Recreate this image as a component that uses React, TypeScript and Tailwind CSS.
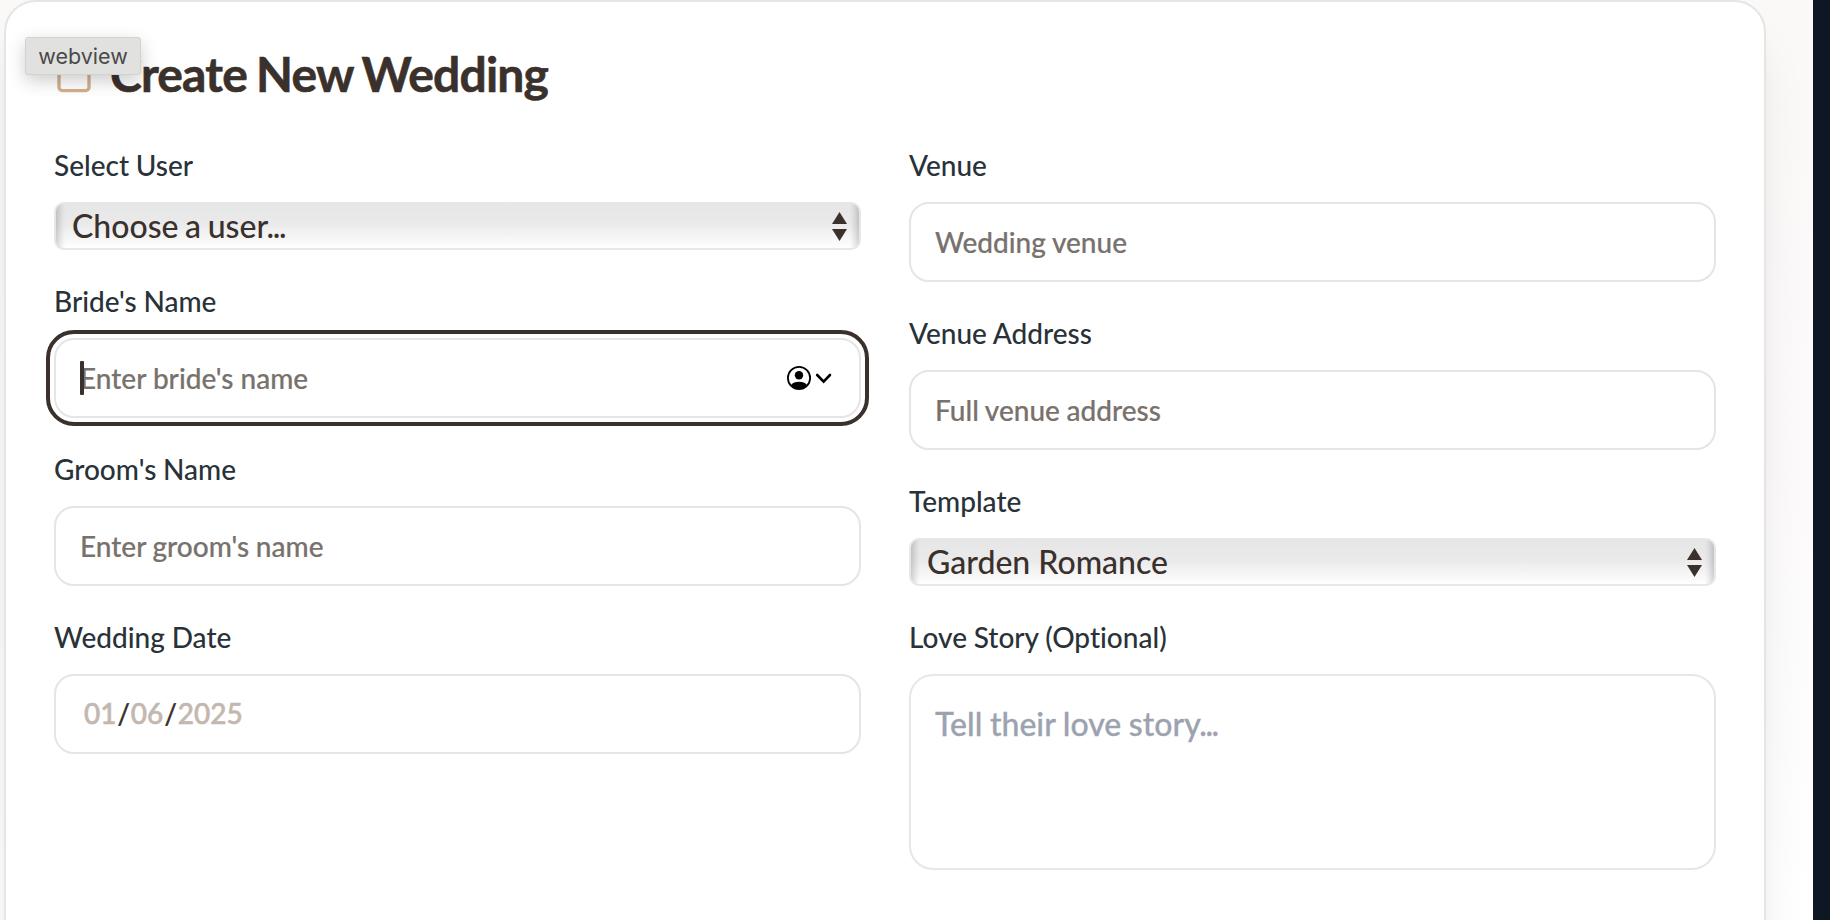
import type { ReactNode } from "react";

function Field({ label, children }: { label: string; children: ReactNode }) {
  return (
    <div className="flex flex-col">
      <label className="mb-[23px] block h-7 text-[28px] leading-7 font-medium [word-spacing:-0.3px] whitespace-nowrap text-[#293238]">
        {label}
      </label>
      {children}
    </div>
  );
}

function TextInput({ placeholder }: { placeholder: string }) {
  return (
    <input
      type="text"
      placeholder={placeholder}
      className="block h-20 w-full rounded-[20px] border-2 border-[#e5e5e5] bg-white px-6 text-[28px] font-medium [word-spacing:-0.4px] text-[#3a302c] [-webkit-text-stroke:0.2px] placeholder:text-[#78716c]"
    />
  );
}

function FocusedInput({ placeholder }: { placeholder: string }) {
  return (
    <div className="relative flex h-20 items-center justify-between rounded-[20px] border-2 border-[#e5e5e5] bg-white pr-[26px] pl-6 outline-4 outline-offset-4 outline-[#3a302c]">
      <span className="text-[28px] font-medium text-[#78716c] [-webkit-text-stroke:0.2px]">{placeholder}</span>
      <span className="absolute top-[21px] left-6 h-[34px] w-1 rounded-[1px] bg-[#3a302c]" />
      <svg className="h-6 w-[46px]" viewBox="0 0 46 24" fill="none">
        <circle cx="12" cy="12" r="11.1" stroke="#000" strokeWidth="1.8" />
        <circle cx="12" cy="9.3" r="4.2" fill="#000" />
        <path d="M4 19 C7 14.8 17 14.8 20 19 C16 24 8 24 4 19Z" fill="#000" />
        <path d="M30.2 9 L36.6 15.6 L43 9" stroke="#000" strokeWidth="2.6" strokeLinecap="round" />
      </svg>
    </div>
  );
}

function SelectBox({ value, ellipsis = false }: { value: string; ellipsis?: boolean }) {
  return (
    <div className="flex h-12 items-center justify-between rounded-[10px] border-2 border-[#e5e7eb] bg-[linear-gradient(90deg,#0000002a_0px,#0000000f_5px,#00000000_9px,#00000000_calc(100%-9px),#0000000f_calc(100%-5px),#0000002a_100%),linear-gradient(180deg,#e6e6e6_0%,#eaeaea_45%,#f5f5f5_75%,#ffffff_100%)] pr-3 pl-4">
      <span className="text-[32px] leading-[44px] font-medium text-[#3a302c]">
        {ellipsis ? (
          <span className="[word-spacing:-1.5px]">
            {value}
            <span className="-ml-[1.5px] tracking-[-1.4px]">...</span>
          </span>
        ) : (
          value
        )}
      </span>
      <svg className="h-[29px] w-[15px]" viewBox="0 0 15 29" fill="#3a302c">
        <path d="M7.5 0 L15 12 H0Z" />
        <path d="M7.5 29 L15 17 H0Z" />
      </svg>
    </div>
  );
}

export default function App() {
  return (
    <div className="relative flex h-[920px] w-[1830px] overflow-hidden bg-[#0f1624] font-['Lato',sans-serif] [font-variant-ligatures:none]">
      <main className="h-[920px] w-[1813px] overflow-hidden bg-[linear-gradient(180deg,#faf9f7_0%,#fcfafb_50%,#ffffff_100%)] pl-1">
        <section className="h-[1100px] w-[1762px] rounded-[32px] border-2 border-[#e5e5e5] bg-white px-12 pt-12 shadow-[0_40px_50px_-10px_rgba(0,0,0,0.1),0_16px_20px_-12px_rgba(0,0,0,0.1)]">
          <header className="flex h-12 items-center gap-4">
            <svg className="h-10 w-10" viewBox="0 0 24 24" fill="none" stroke="#d4b08c" strokeWidth="2" strokeLinecap="round" strokeLinejoin="round">
              <path d="M8 2v4M16 2v4M3 10h18" />
              <rect x="3" y="4" width="18" height="18" rx="2" />
            </svg>
            <h1 className="text-[48px] leading-[48px] font-bold tracking-[-0.8px] [word-spacing:-1.8px] text-[#3a302c] [-webkit-text-stroke:0.6px]">Create New Wedding</h1>
          </header>
          <form className="mt-[53px] grid grid-cols-2 gap-12">
            <div className="flex flex-col gap-[37px]">
              <Field label="Select User"><SelectBox value="Choose a user" ellipsis /></Field>
              <Field label="Bride's Name"><FocusedInput placeholder="Enter bride's name" /></Field>
              <Field label="Groom's Name"><TextInput placeholder="Enter groom's name" /></Field>
              <Field label="Wedding Date">
                <div className="flex h-20 items-center rounded-[20px] border-2 border-[#e5e5e5] bg-white px-7 pb-0.5 text-[28px] font-medium text-[#c3b8b0] [-webkit-text-stroke:0.6px]">
                  <span>01</span><span className="px-[0.8px] text-[#3a302c] [-webkit-text-stroke:0.2px]">/</span>
                  <span>06</span><span className="px-[0.8px] text-[#3a302c] [-webkit-text-stroke:0.2px]">/</span>
                  <span>2025</span>
                </div>
              </Field>
            </div>
            <div className="flex flex-col gap-[37px]">
              <Field label="Venue"><TextInput placeholder="Wedding venue" /></Field>
              <Field label="Venue Address"><TextInput placeholder="Full venue address" /></Field>
              <Field label="Template"><SelectBox value="Garden Romance" /></Field>
              <Field label="Love Story (Optional)">
                <div className="h-[196px] rounded-[24px] border-2 border-[#e5e7eb] bg-white px-6 py-6 text-[32px] leading-[48px] font-medium [word-spacing:-0.5px] text-[#9ca3af] [-webkit-text-stroke:0.3px]">
                  Tell their love story<span className="-ml-[1.5px] tracking-[-1.4px]">...</span>
                </div>
              </Field>
            </div>
          </form>
        </section>
      </main>
      <div className="absolute top-[37px] left-[25px] flex h-[38px] w-[116px] items-center justify-center rounded-[3px] border border-[#d2d2d0] bg-[#e1e1df] font-['Inter',sans-serif] text-[21.5px] text-[#4a4a4a] shadow-[0_6px_18px_rgba(0,0,0,0.2)]">
        webview
      </div>
    </div>
  );
}
